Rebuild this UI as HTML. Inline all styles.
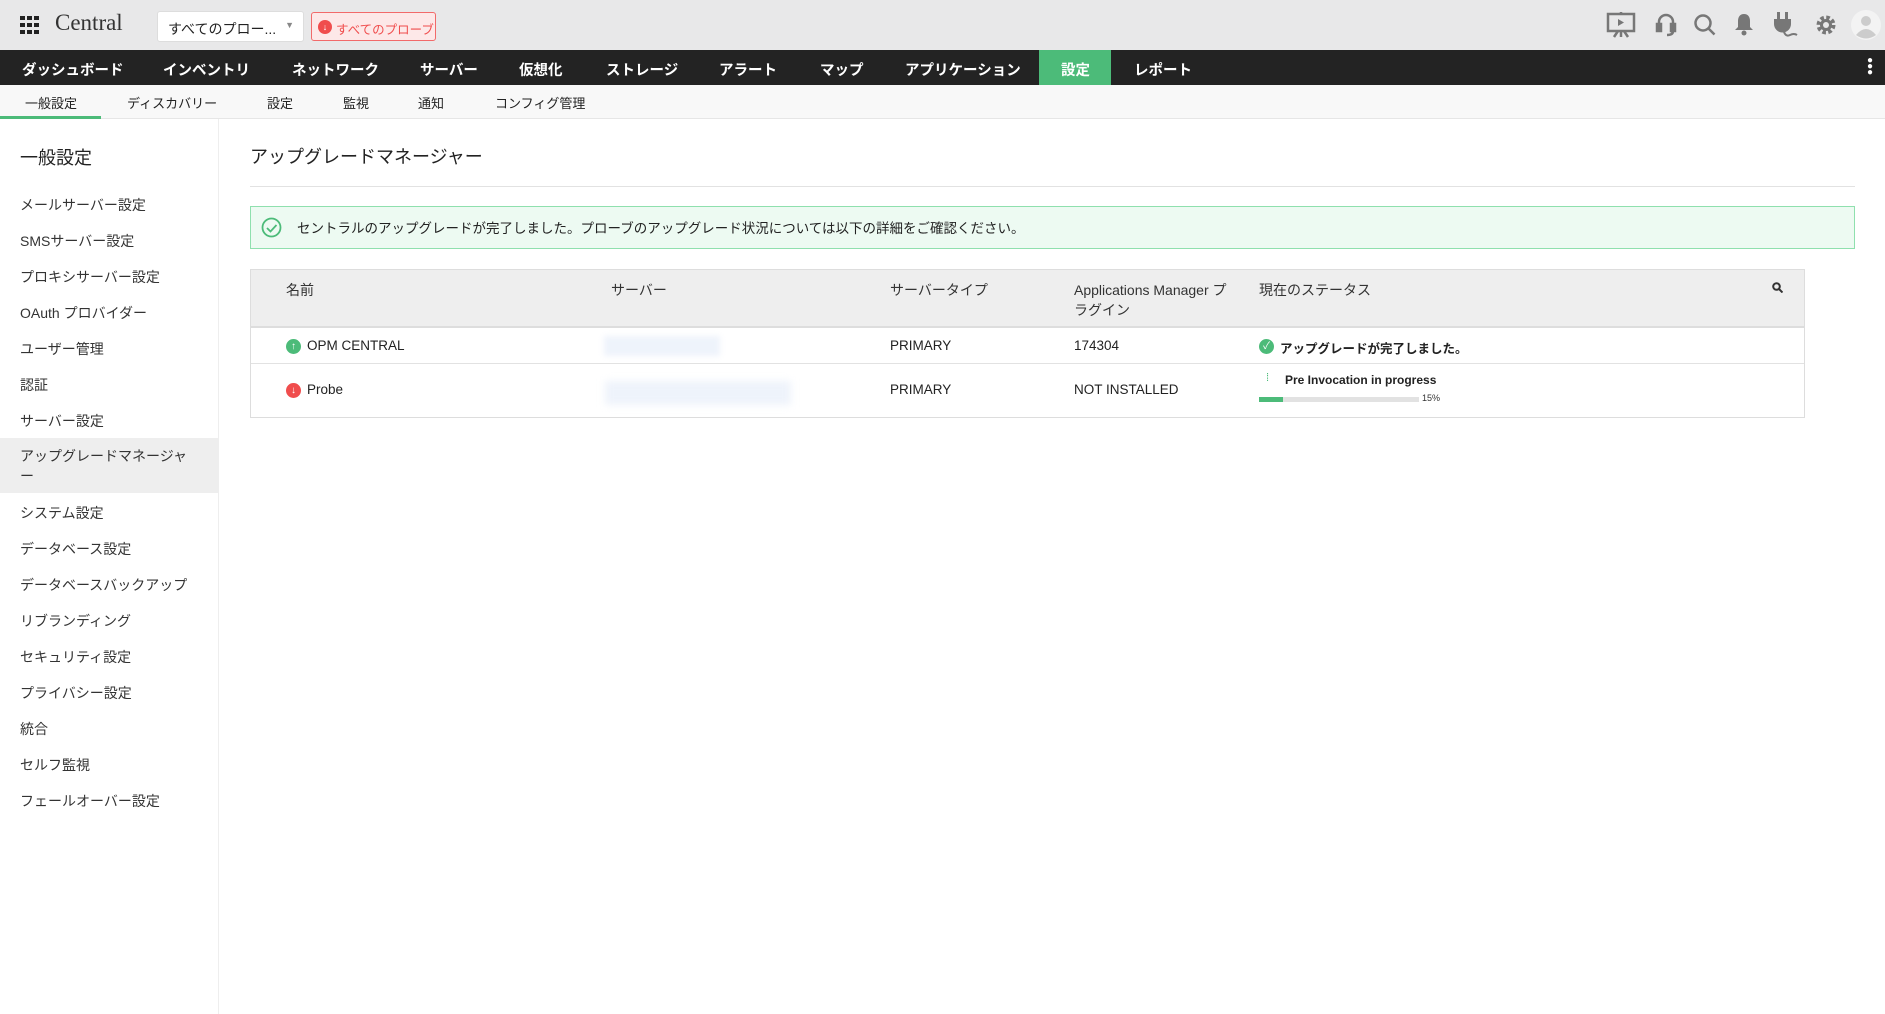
<!DOCTYPE html>
<html><head><meta charset="utf-8"><style>
*{margin:0;padding:0;box-sizing:border-box}
body{width:1885px;height:1014px;overflow:hidden;background:#fff;font-family:"Liberation Sans","Noto Sans CJK JP",sans-serif;color:#333;position:relative}
.abs{position:absolute;white-space:nowrap}
#top{position:absolute;left:0;top:0;width:1885px;height:50px;background:#e8e8e9}
#nav{position:absolute;left:0;top:50px;width:1885px;height:35px;background:#232323}
#nav span{position:absolute;top:9px;color:#fff;font-size:14.5px;font-weight:bold}
#sub{position:absolute;left:0;top:85px;width:1885px;height:34px;background:#f8f8f8;border-bottom:1px solid #e6e6e6}
#sub span{position:absolute;top:8px;font-size:13px;color:#222}
#side{position:absolute;left:0;top:119px;width:219px;height:895px;background:#fff;border-right:1px solid #eee}
#side div{position:absolute;left:20px;font-size:14px;color:#333}
.th{position:absolute;font-size:14px;color:#333}
.td{position:absolute;font-size:13.5px;color:#222}
</style></head><body>
<div id="top">
 <svg class="abs" style="left:20px;top:16px" width="20" height="18"><g fill="#222"><rect x="0" y="0" width="5" height="4"/><rect x="7" y="0" width="5" height="4"/><rect x="14" y="0" width="5" height="4"/><rect x="0" y="7" width="5" height="4"/><rect x="7" y="7" width="5" height="4"/><rect x="14" y="7" width="5" height="4"/><rect x="0" y="14" width="5" height="4"/><rect x="7" y="14" width="5" height="4"/><rect x="14" y="14" width="5" height="4"/></g></svg>
 <div class="abs" style="left:55px;top:10px;font-size:23px;color:#333;font-family:'Liberation Serif',serif">Central</div>
 <div class="abs" style="left:157px;top:11px;width:147px;height:31px;background:#fff;border:1px solid #ddd;border-radius:3px;font-size:14px;padding:7px 10px;color:#222">すべてのプロー...<span style="position:absolute;right:9px;top:8px;font-size:9px;color:#888">▼</span></div>
 <div class="abs" style="left:311px;top:12px;width:125px;height:29px;background:#fde8e8;border:1px solid #f26a6a;border-radius:3px;font-size:12.5px;padding:6px 0 0 24px;color:#f04d4d"><span style="position:absolute;left:6px;top:7px;width:14px;height:14px;border-radius:50%;background:#f04d4d;color:#fff;font-size:9px;text-align:center;line-height:14px">↓</span>すべてのプローブ</div>
 <svg class="abs" style="left:1606px;top:12px" width="30" height="26" fill="none" stroke="#777" stroke-width="2.5"><rect x="2" y="2" width="26" height="17"/><path d="M15 0v2M15 19v6M8 25l4-6M22 25l-4-6"/><path d="M12 7l6 3.5-6 3.5z" fill="#777" stroke="none"/></svg>
 <svg class="abs" style="left:1655px;top:12px" width="22" height="26" fill="none" stroke="#777" stroke-width="2.5"><path d="M4 14v-4a7 7 0 0 1 14 0v4"/><rect x="2" y="12" width="4" height="7" fill="#777"/><rect x="16" y="12" width="4" height="7" fill="#777"/><path d="M18 19q0 4-6 4"/></svg>
 <svg class="abs" style="left:1693px;top:13px" width="24" height="24" fill="none" stroke="#777" stroke-width="2.5"><circle cx="10" cy="10" r="7.5"/><path d="M15.5 15.5l6 6"/></svg>
 <svg class="abs" style="left:1734px;top:12px" width="20" height="24" fill="#777"><path d="M10 2c-4 0-6 3-6 7v6l-3 3h18l-3-3V9c0-4-2-7-6-7z"/><circle cx="10" cy="21" r="2.5"/></svg>
 <svg class="abs" style="left:1772px;top:12px" width="26" height="26" fill="#777"><rect x="5" y="0" width="3" height="7"/><rect x="13" y="0" width="3" height="7"/><path d="M2 7h17v5a8.5 8.5 0 0 1-17 0z"/><path d="M12 20q2 5 6 3t7 0" fill="none" stroke="#777" stroke-width="2"/></svg>
 <svg class="abs" style="left:1814px;top:13px" width="24" height="24"><circle cx="12" cy="12" r="7" fill="none" stroke="#777" stroke-width="5" stroke-dasharray="3.3 2.2"/><circle cx="12" cy="12" r="6" fill="#777"/><circle cx="12" cy="12" r="3" fill="#e8e8e9"/></svg>
 <svg class="abs" style="left:1851px;top:10px" width="30" height="30"><circle cx="15" cy="15" r="15" fill="#f3f3f3"/><circle cx="15" cy="11" r="5" fill="#ccc"/><path d="M5 25q10-12 20 0q-10 7-20 0z" fill="#ccc"/></svg>
</div>
<div id="nav">
 <span style="left:22px">ダッシュボード</span><span style="left:163px">インベントリ</span><span style="left:292px">ネットワーク</span><span style="left:420px">サーバー</span><span style="left:519px">仮想化</span><span style="left:606px">ストレージ</span><span style="left:719px">アラート</span><span style="left:820px">マップ</span><span style="left:905px">アプリケーション</span>
 <div class="abs" style="left:1039px;top:0;width:72px;height:35px;background:#4cbb79"></div><span style="left:1061px">設定</span>
 <span style="left:1134px">レポート</span>
 <div class="abs" style="left:1867px;top:8px;width:5px;line-height:6px;color:#fff;font-size:10px">●<br>●<br>●</div>
</div>
<div id="sub">
 <span style="left:25px">一般設定</span><span style="left:127px">ディスカバリー</span><span style="left:267px">設定</span><span style="left:343px">監視</span><span style="left:418px">通知</span><span style="left:495px">コンフィグ管理</span>
 <div class="abs" style="left:0;top:31px;width:101px;height:3px;background:#4cbb79"></div>
</div>
<div id="side">
 <div style="top:25px;font-size:18px;color:#222">一般設定</div>
 <div style="top:76px">メールサーバー設定</div>
 <div style="top:112px">SMSサーバー設定</div>
 <div style="top:148px">プロキシサーバー設定</div>
 <div style="top:184px">OAuth プロバイダー</div>
 <div style="top:220px">ユーザー管理</div>
 <div style="top:256px">認証</div>
 <div style="top:292px">サーバー設定</div>
 <div style="left:0;top:319px;width:219px;height:55px;background:#eeeeee"></div>
 <div style="top:327px;line-height:20px">アップグレードマネージャ<br>ー</div>
 <div style="top:384px">システム設定</div>
 <div style="top:420px">データベース設定</div>
 <div style="top:456px">データベースバックアップ</div>
 <div style="top:492px">リブランディング</div>
 <div style="top:528px">セキュリティ設定</div>
 <div style="top:564px">プライバシー設定</div>
 <div style="top:600px">統合</div>
 <div style="top:636px">セルフ監視</div>
 <div style="top:672px">フェールオーバー設定</div>
</div>
<div class="abs" style="left:250px;top:143px;font-size:18px;color:#222">アップグレードマネージャー</div>
<div class="abs" style="left:250px;top:186px;width:1605px;height:1px;background:#e2e2e2"></div>
<div class="abs" style="left:250px;top:206px;width:1605px;height:43px;background:#edfaf2;border:1px solid #8fe0ae"></div>
<svg class="abs" style="left:261px;top:217px" width="21" height="21" fill="none" stroke="#4cbb79" stroke-width="1.8"><circle cx="10.5" cy="10.5" r="9"/><path d="M6 11l3.5 3.5L15.5 8"/></svg>
<div class="abs" style="left:297px;top:217px;font-size:13.5px;color:#222">セントラルのアップグレードが完了しました。プローブのアップグレード状況については以下の詳細をご確認ください。</div>
<div class="abs" style="left:250px;top:269px;width:1555px;height:149px;border:1px solid #ddd"></div>
<div class="abs" style="left:251px;top:270px;width:1553px;height:58px;background:#eeeeee;border-bottom:2px solid #ddd"></div>
<div class="th" style="left:286px;top:280px">名前</div>
<div class="th" style="left:611px;top:280px">サーバー</div>
<div class="th" style="left:890px;top:280px">サーバータイプ</div>
<div class="th" style="left:1074px;top:280px;line-height:20px">Applications Manager プ<br>ラグイン</div>
<div class="th" style="left:1259px;top:280px">現在のステータス</div>
<svg class="abs" style="left:1772px;top:282px" width="11" height="11" fill="none" stroke="#333" stroke-width="2"><circle cx="4.5" cy="4.5" r="3.3"/><path d="M7 7l3.5 3.5"/></svg>
<div class="abs" style="left:251px;top:363px;width:1553px;height:1px;background:#e2e2e2"></div>
<div class="abs" style="left:286px;top:339px;width:15px;height:15px;border-radius:50%;background:#4cbb79;color:#fff;font-size:10px;text-align:center;line-height:15px">↑</div>
<div class="td" style="left:307px;top:338px">OPM CENTRAL</div>
<div class="abs" style="left:604px;top:336px;width:116px;height:20px;background:#eef3fb;filter:blur(3px)"></div>
<div class="td" style="left:890px;top:338px">PRIMARY</div>
<div class="td" style="left:1074px;top:338px">174304</div>
<div class="abs" style="left:1259px;top:339px;width:15px;height:15px;border-radius:50%;background:#4cbb79;color:#fff;font-size:10px;text-align:center;line-height:15px">✓</div>
<div class="td" style="left:1280px;top:338px;font-weight:bold;font-size:12.5px">アップグレードが完了しました。</div>
<div class="abs" style="left:286px;top:383px;width:15px;height:15px;border-radius:50%;background:#f04d4d;color:#fff;font-size:10px;text-align:center;line-height:15px">↓</div>
<div class="td" style="left:307px;top:382px">Probe</div>
<div class="abs" style="left:605px;top:381px;width:186px;height:24px;background:#eef3fb;filter:blur(4px)"></div>
<div class="td" style="left:890px;top:382px">PRIMARY</div>
<div class="td" style="left:1074px;top:382px">NOT INSTALLED</div>
<div class="abs" style="left:1266px;top:372px;font-size:11px;color:#4cbb79">⁞</div>
<div class="td" style="left:1285px;top:373px;font-weight:bold;font-size:12px">Pre Invocation in progress</div>
<div class="abs" style="left:1259px;top:397px;width:160px;height:5px;background:#e2e2e2"></div>
<div class="abs" style="left:1259px;top:397px;width:24px;height:5px;background:#4cbb79"></div>
<div class="abs" style="left:1422px;top:393px;font-size:9px;color:#333">15%</div>
</body></html>
